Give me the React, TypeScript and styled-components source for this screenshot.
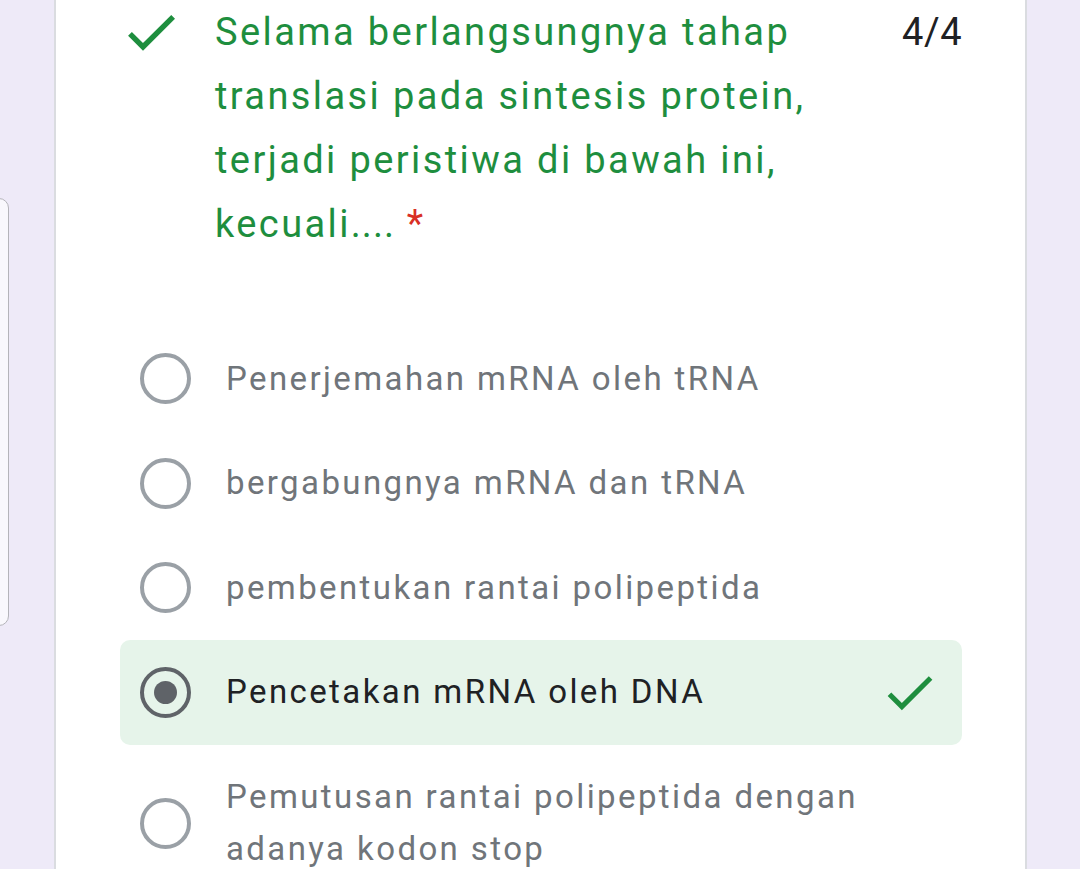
import React from "react";
import styled, { createGlobalStyle } from "styled-components";

const Global = createGlobalStyle`
  html, body {
    margin: 0;
    padding: 0;
    background: #eeeaf8;
    overflow: hidden;
  }
  body {
    font-family: Roboto, "Noto Sans", Arial, sans-serif;
  }
`;

const Page = styled.div`
  position: relative;
  height: 869px;
  padding-left: 54px;
  background: #eeeaf8;
  box-sizing: border-box;
`;

const SideTab = styled.div`
  position: absolute;
  left: -30px;
  top: 198px;
  width: 39px;
  height: 428px;
  background: #f9f8fd;
  border: 1.5px solid #b4b4ba;
  border-radius: 10px;
  box-sizing: border-box;
`;

const Card = styled.div`
  width: 973px;
  height: 869px;
  box-sizing: border-box;
  background: #ffffff;
  border-left: 2px solid #dadce0;
  border-right: 2px solid #dadce0;
  padding: 0 63px 0 64px;
`;

const Header = styled.div`
  display: flex;
  align-items: flex-start;
`;

const CheckIcon = styled.svg<{ $size: number }>`
  flex: none;
  width: ${(p) => p.$size}px;
  height: ${(p) => p.$size}px;
  fill: #1e8e3e;
`;

const HeaderCheck = styled(CheckIcon)`
  margin-left: -1px;
  margin-right: 32px;
`;

const RowCheck = styled(CheckIcon)`
  margin: -6px 0;
`;

const Title = styled.div`
  flex: 1;
  font-size: 38px;
  letter-spacing: 2.4px;
  line-height: 64px;
  color: #1e8e3e;
  padding-right: 30px;
`;

const Dots = styled.span`
  letter-spacing: 1px;
`;

const Required = styled.span`
  color: #d93025;
  letter-spacing: 0;
`;

const Score = styled.div`
  flex: none;
  font-size: 38px;
  letter-spacing: 0.5px;
  line-height: 64px;
  color: #202124;
`;

const Options = styled.div`
  display: flex;
  flex-direction: column;
  margin-top: 70.5px;
`;

const OptionRow = styled.div<{ $selected?: boolean }>`
  display: flex;
  align-items: center;
  padding: 26px 22px 26px 20px;
  border-radius: 10px;
  background: ${(p) => (p.$selected ? "#e6f4ea" : "transparent")};
`;

const Radio = styled.div<{ $selected?: boolean }>`
  flex: none;
  width: 51px;
  height: 51px;
  box-sizing: border-box;
  border-radius: 50%;
  border: 4px solid ${(p) => (p.$selected ? "#5f6368" : "#9aa0a6")};
  display: flex;
  align-items: center;
  justify-content: center;
  &::after {
    content: "";
    display: ${(p) => (p.$selected ? "block" : "none")};
    width: 23px;
    height: 23px;
    border-radius: 50%;
    background: #5f6368;
  }
`;

const OptionText = styled.div<{ $selected?: boolean }>`
  flex: 1;
  margin-left: 35px;
  font-size: 33px;
  letter-spacing: 2.4px;
  line-height: 52.5px;
  color: ${(p) => (p.$selected ? "#202124" : "#70757a")};
`;

const CheckPath = () => (
  <path d="M9 16.17L4.83 12l-1.42 1.41L9 19 21 7l-1.41-1.41z" />
);

const options = [
  "Penerjemahan mRNA oleh tRNA",
  "bergabungnya mRNA dan tRNA",
  "pembentukan rantai polipeptida",
  "Pencetakan mRNA oleh DNA",
  "Pemutusan rantai polipeptida dengan adanya kodon stop",
];

export default function App() {
  return (
    <>
      <Global />
      <Page>
        <SideTab />
        <Card>
          <Header>
            <HeaderCheck $size={64} viewBox="0 0 24 24">
              <CheckPath />
            </HeaderCheck>
            <Title>
              Selama berlangsungnya tahap translasi pada sintesis protein,
              terjadi peristiwa di bawah ini, kecuali<Dots>....</Dots>{" "}
              <Required>*</Required>
            </Title>
            <Score>4/4</Score>
          </Header>
          <Options>
            {options.map((o, i) => {
              const sel = i === 3;
              return (
                <OptionRow key={o} $selected={sel}>
                  <Radio $selected={sel} />
                  <OptionText $selected={sel}>{o}</OptionText>
                  {sel && (
                    <RowCheck $size={61} viewBox="0 0 24 24">
                      <CheckPath />
                    </RowCheck>
                  )}
                </OptionRow>
              );
            })}
          </Options>
        </Card>
      </Page>
    </>
  );
}
